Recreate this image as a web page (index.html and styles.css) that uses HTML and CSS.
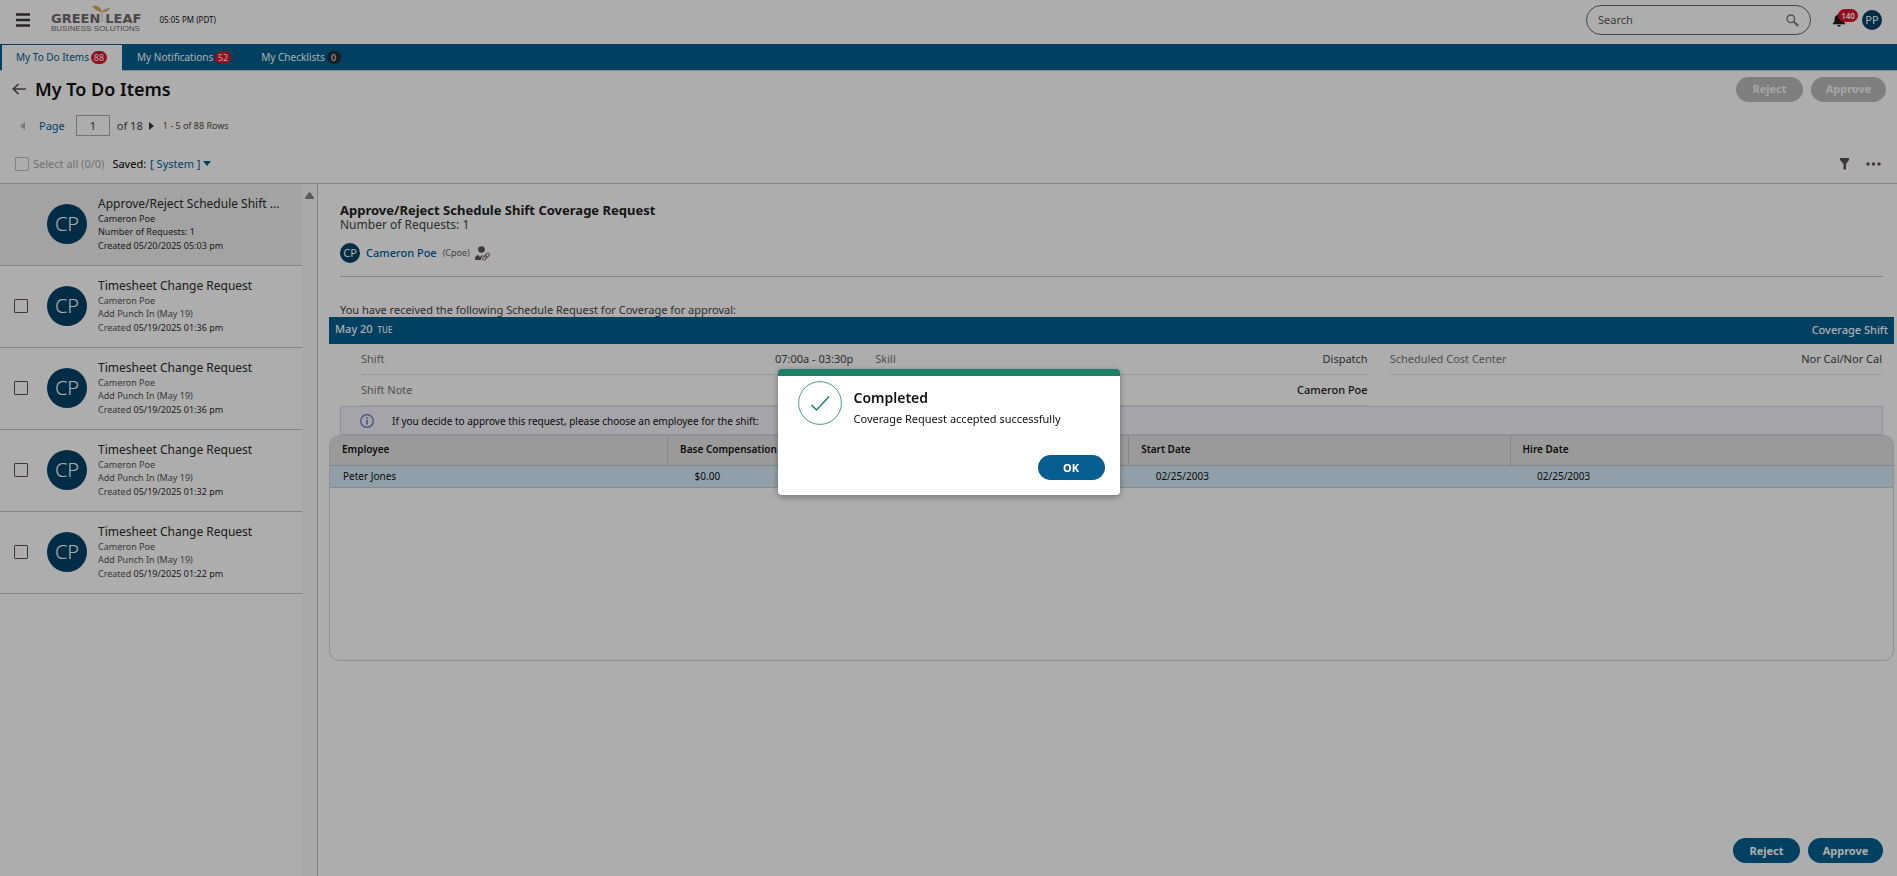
FILE: index.html
```html
<!DOCTYPE html>
<html lang="en">

<head>
    <meta charset="UTF-8">
    <meta name="viewport" content="width=device-width, initial-scale=1.0">
    <title>My To Do Items</title>
    <link rel="stylesheet" href="styles.css">
</head>

<body>
    <!-- Top bar: menu, logo, clock, search, user -->
    <header class="topbar">
        <button class="icon-btn menu-btn" aria-label="Menu">
            <svg width="14" height="14" viewBox="0 0 14 14"><path d="M0 1.5h14M0 7h14M0 12.5h14" stroke="#3c3536" stroke-width="2.4"/></svg>
        </button>
        <a class="logo" href="#" aria-label="Green Leaf Business Solutions">
            <span class="logo-name">GREEN<svg class="logo-leaf" width="22" height="18" viewBox="0 0 22 18"><path d="M12 7C9 7 5 5 2 1c5-1 9 1 10 6z" fill="#d8a95e"/><path d="M12 7c1-3 4-4 8-4-1 3-4 5-8 4z" fill="#e0b878"/><path d="M12 6v11" stroke="#d5c6ac" stroke-width="1"/></svg>LEAF</span>
            <span class="logo-sub">BUSINESS SOLUTIONS</span>
        </a>
        <span class="clock">05:05 PM (PDT)</span>
        <div class="search">
            <input type="search" placeholder="Search" aria-label="Search">
            <svg width="13" height="13" viewBox="0 0 13 13" fill="none" stroke="#7a7a7a"><circle cx="4.8" cy="4.8" r="3.8" stroke-width="1.4"/><path d="M7.800 7.800l4.400 4.200" stroke-width="2"/></svg>
        </div>
        <button class="icon-btn bell" aria-label="Notifications">
            <svg width="14" height="14" viewBox="0 0 14 14" fill="#1c1c1c"><path d="M7 0.5c-.8 0-1.2.5-1.2 1.2C3.600 2.300 2.600 4 2.600 6c0 2.500-.6 3.600-1.900 4.500V11.300h12.600v-.8C12 9.600 11.400 8.500 11.400 6c0-2-1-3.700-3.200-4.300C8.200 1 7.800.5 7 .5zM5.300 12h3.400c0 1-.7 1.700-1.700 1.700S5.300 13 5.300 12z"/></svg>
            <span class="badge bell-count">140</span>
        </button>
        <button class="avatar avatar-sm">PP</button>
    </header>

    <!-- Tabs -->
    <nav class="tabs">
        <a class="tab active" href="#">My To Do Items<span class="badge">88</span></a>
        <a class="tab" href="#">My Notifications<span class="badge">52</span></a>
        <a class="tab" href="#">My Checklists<span class="badge dark">0</span></a>
    </nav>

    <!-- Page title -->
    <div class="title-row">
        <button class="icon-btn" aria-label="Back">
            <svg width="14" height="12" viewBox="0 0 14 12" fill="none" stroke="#5d5053" stroke-width="1.700"><path d="M14 6H1.500M6.500 1L1.300 6l5.200 5"/></svg>
        </button>
        <h1>My To Do Items</h1>
        <div class="actions">
            <button class="btn" disabled>Reject</button>
            <button class="btn btn-approve" disabled>Approve</button>
        </div>
    </div>

    <!-- Paging -->
    <div class="pager">
        <button class="icon-btn" aria-label="Previous page" disabled>
            <svg width="5" height="8" viewBox="0 0 5 8"><path d="M5 0v8L0 4z" fill="#b4b4b4"/></svg>
        </button>
        <label class="page-label" for="page">Page</label>
        <input class="page-input" id="page" type="text" value="1">
        <span>of 18</span>
        <button class="icon-btn page-next" aria-label="Next page">
            <svg width="5" height="8" viewBox="0 0 5 8"><path d="M0 0v8l5-4z" fill="#3c3536"/></svg>
        </button>
        <span class="rows">1 - 5 of 88 Rows</span>
    </div>

    <!-- Select all, saved view and filter -->
    <div class="filter-row">
        <input class="check check-off" id="select-all" type="checkbox" disabled>
        <label class="muted" for="select-all">Select all (0/0)</label>
        <span class="saved">Saved:</span>
        <a class="saved-view" href="#">[ System ]<svg width="8" height="5" viewBox="0 0 8 5"><path d="M0 0h8L4 5z" fill="#00608f"/></svg></a>
        <button class="icon-btn filter" aria-label="Filter">
            <svg width="9" height="12" viewBox="0 0 9 12"><path d="M0 0h9v2L6 6v5.500H3.500V6L0 2z" fill="#5d5053"/></svg>
        </button>
        <button class="icon-btn" aria-label="More">
            <svg width="15" height="4" viewBox="0 0 15 4" fill="#5d5053"><circle cx="2" cy="2" r="1.700"/><circle cx="7.500" cy="2" r="1.700"/><circle cx="13" cy="2" r="1.700"/></svg>
        </button>
    </div>

    <main class="content">
        <!-- List of requests -->
        <aside class="sidebar">
            <ul class="list">
                <li class="item selected">
                    <span class="check-space"></span>
                    <span class="avatar avatar-lg">CP</span>
                    <div class="item-text">
                        <h3>Approve/Reject Schedule Shift ...</h3>
                        <p>Cameron Poe</p>
                        <p>Number of Requests: 1</p>
                        <p class="created">Created <span>05/20/2025 05:03 pm</span></p>
                    </div>
                </li>
                <li class="item">
                    <input class="check" type="checkbox" aria-label="Select request">
                    <span class="avatar avatar-lg">CP</span>
                    <div class="item-text">
                        <h3>Timesheet Change Request</h3>
                        <p>Cameron Poe</p>
                        <p>Add Punch In (May 19)</p>
                        <p class="created">Created <span>05/19/2025 01:36 pm</span></p>
                    </div>
                </li>
                <li class="item">
                    <input class="check" type="checkbox" aria-label="Select request">
                    <span class="avatar avatar-lg">CP</span>
                    <div class="item-text">
                        <h3>Timesheet Change Request</h3>
                        <p>Cameron Poe</p>
                        <p>Add Punch In (May 19)</p>
                        <p class="created">Created <span>05/19/2025 01:36 pm</span></p>
                    </div>
                </li>
                <li class="item">
                    <input class="check" type="checkbox" aria-label="Select request">
                    <span class="avatar avatar-lg">CP</span>
                    <div class="item-text">
                        <h3>Timesheet Change Request</h3>
                        <p>Cameron Poe</p>
                        <p>Add Punch In (May 19)</p>
                        <p class="created">Created <span>05/19/2025 01:32 pm</span></p>
                    </div>
                </li>
                <li class="item">
                    <input class="check" type="checkbox" aria-label="Select request">
                    <span class="avatar avatar-lg">CP</span>
                    <div class="item-text">
                        <h3>Timesheet Change Request</h3>
                        <p>Cameron Poe</p>
                        <p>Add Punch In (May 19)</p>
                        <p class="created">Created <span>05/19/2025 01:22 pm</span></p>
                    </div>
                </li>
            </ul>
            <div class="scrollbar">
                <svg width="9" height="7" viewBox="0 0 9 7"><path d="M3.700.6a1 1 0 0 1 1.600 0L8.800 5.400Q9.300 7 8 7H1Q-.3 7 .2 5.400z" fill="#858585"/></svg>
            </div>
        </aside>

        <!-- Request detail -->
        <section class="detail">
            <div class="detail-head">
                <h2>Approve/Reject Schedule Shift Coverage Request</h2>
                <p class="count">Number of Requests: 1</p>
                <div class="person">
                    <span class="avatar avatar-sm">CP</span>
                    <a class="person-name" href="#">Cameron Poe</a>
                    <span class="person-id">(Cpoe)</span>
                    <svg width="15" height="15" viewBox="0 0 15 15"><circle cx="6.500" cy="3.500" r="3.300" fill="#5d5053"/><path d="M0 14c0-3 1-4.500 3-5l2 2 2-2 .8.4L6 12v2z" fill="#5d5053"/><g fill="none" stroke="#8a8284" stroke-width="1.200"><rect x="7.200" y="10.300" width="5" height="3" rx="1.500" transform="rotate(-45 9.700 11.800)"/><rect x="9.700" y="7.900" width="5" height="3" rx="1.500" transform="rotate(-45 12.200 9.400)"/></g></svg>
                </div>
            </div>
            <p class="intro">You have received the following Schedule Request for Coverage for approval:</p>
            <div class="day-bar">
                <span>May 20 <small>TUE</small></span>
                <span>Coverage Shift</span>
            </div>
            <dl class="fields">
                <div class="field"><dt>Shift</dt><dd>07:00a - 03:30p</dd></div>
                <div class="field"><dt>Skill</dt><dd>Dispatch</dd></div>
                <div class="field"><dt>Scheduled Cost Center</dt><dd>Nor Cal/Nor Cal</dd></div>
                <div class="field wide"><dt>Shift Note</dt><dd class="strong">Cameron Poe</dd></div>
            </dl>
            <div class="info">
                <svg width="14" height="14" viewBox="0 0 14 14" fill="none"><circle cx="7" cy="7" r="6.300" stroke="#5c78c0" stroke-width="1.200"/><path d="M7 6v4.500M7 3.300v1.500" stroke="#7a5fc0" stroke-width="1.500"/></svg>
                If you decide to approve this request, please choose an employee for the shift:
            </div>
            <div class="grid">
                <table>
                    <thead>
                        <tr>
                            <th class="col-employee">Employee</th>
                            <th class="col-base">Base Compensation</th>
                            <th class="col-date">Start Date</th>
                            <th>Hire Date</th>
                        </tr>
                    </thead>
                    <tbody>
                        <tr>
                            <td>Peter Jones</td>
                            <td>$0.00</td>
                            <td>02/25/2003</td>
                            <td>02/25/2003</td>
                        </tr>
                    </tbody>
                </table>
            </div>
            <div class="actions actions-bottom">
                <button class="btn">Reject</button>
                <button class="btn btn-approve">Approve</button>
            </div>
        </section>
    </main>

    <!-- Success message over the page -->
    <div class="overlay">
        <div class="dialog" role="dialog" aria-labelledby="dialog-title">
            <svg class="dialog-icon" width="44" height="44" viewBox="0 0 44 44" fill="none" stroke="#1c8069"><circle cx="22" cy="22" r="21.400" stroke="#4f9a93"/><path d="M13.500 24l5 5L31 15.500" stroke-width="1.500"/></svg>
            <div class="dialog-text">
                <h2 id="dialog-title">Completed</h2>
                <p>Coverage Request accepted successfully</p>
            </div>
            <button class="btn dialog-ok">OK</button>
        </div>
    </div>
</body>

</html>
```
FILE: styles.css
```css
* {
    box-sizing: border-box;
}

body {
    margin: 0;
    min-height: 100vh;
    display: flex;
    flex-direction: column;
    font-family: "Noto Sans", sans-serif;
    font-size: 11px;
    line-height: 16px;
    color: #444;
    background-color: #fff;
}

h1, h2, h3, p, ul, dl, dd {
    margin: 0;
    padding: 0;
}

a {
    color: #00609b;
    text-decoration: none;
}

button, input {
    font: inherit;
    color: inherit;
}

svg {
    display: block;
    flex: none;
}

.icon-btn {
    display: flex;
    padding: 0;
    border: none;
    background: none;
    cursor: pointer;
}

/* Buttons */
.btn {
    height: 25px;
    min-width: 67px;
    padding: 0 13px;
    border: none;
    border-radius: 13px;
    background-color: #00608f;
    color: #fff;
    font-weight: 700;
    cursor: pointer;
}

.btn:disabled {
    background-color: #bcbcbc;
    color: #f4f4f4;
}

.btn-approve {
    min-width: 75px;
}

.actions {
    display: flex;
    gap: 8px;
    margin-left: auto;
}

/* Round initials */
.avatar {
    display: flex;
    flex: none;
    align-items: center;
    justify-content: center;
    padding: 0;
    border: none;
    border-radius: 50%;
    background-color: #004268;
    color: #fff;
}

.avatar-sm {
    width: 20px;
    height: 20px;
    font-size: 11px;
}

.avatar-lg {
    width: 40px;
    height: 40px;
    font-size: 20px;
    font-weight: 300;
}

.badge {
    padding: 0 2px;
    min-width: 16px;
    border-radius: 7px;
    background-color: #e0122e;
    color: #fff;
    font-size: 9px;
    line-height: 13px;
    text-align: center;
}

.badge.dark {
    min-width: 14px;
    background-color: #262c36;
}

/* Top bar */
.topbar {
    display: flex;
    align-items: center;
    height: 44px;
    padding: 0 15px 4px 16px;
}

.logo {
    display: flex;
    flex-direction: column;
    margin: 6px 18px 0 21px;
    color: #6f6a6c;
}

.logo-name {
    display: flex;
    font-family: "DejaVu Sans", sans-serif;
    font-size: 13px;
    font-weight: 700;
    line-height: 11px;
}

.logo-leaf {
    margin: -8px -7px 0 -10px;
}

.logo-sub {
    font-family: "Liberation Sans", sans-serif;
    font-size: 8px;
    line-height: 10px;
}

.clock {
    font-size: 8px;
    color: #111;
}

.search {
    display: flex;
    align-items: center;
    width: 225px;
    height: 30px;
    margin-left: auto;
    margin-right: 21px;
    padding: 0 11px;
    border: 1px solid #6a6a6a;
    border-radius: 15px;
}

.search input {
    flex: 1;
    min-width: 0;
    padding: 0;
    border: none;
    outline: none;
    background: none;
}

.search input::placeholder {
    color: #5a5a5a;
}

.bell {
    position: relative;
    margin-right: 16px;
}

.bell-count {
    position: absolute;
    left: 6px;
    top: -4px;
    min-width: 20px;
    font-size: 8px;
    font-weight: 600;
}

/* Tabs */
.tabs {
    display: flex;
    height: 27px;
    padding-left: 2px;
    background-color: #00608f;
    border-bottom: 1px solid #c4c4c4;
}

.tab {
    display: flex;
    align-items: center;
    gap: 2px;
    padding: 0 15px;
    color: #fff;
    font-size: 10px;
}

.tab.active {
    height: 26px;
    margin-top: 1px;
    padding: 0 15px 2px 14px;
    background-color: #fff;
    color: #00608f;
}

/* Title */
.title-row {
    display: flex;
    align-items: center;
    gap: 9px;
    height: 36px;
    padding: 0 11px 0 12px;
}

h1 {
    font-size: 18px;
    font-weight: 600;
    line-height: 24px;
    color: #111;
}

/* Paging */
.pager {
    display: flex;
    align-items: center;
    height: 37px;
    padding-left: 20px;
}

.page-label {
    margin: 0 11px 0 14px;
    color: #00609b;
}

.page-input {
    width: 34px;
    height: 21px;
    margin-right: 7px;
    padding: 0;
    border: 1px solid #aaa;
    background: none;
    text-align: center;
}

.page-next {
    margin: 0 9px 0 6px;
}

.rows {
    font-size: 9px;
    color: #575140;
}

/* Filter row */
.filter-row {
    display: flex;
    align-items: center;
    height: 40px;
    padding: 0 16px 0 15px;
    border-bottom: 1px solid #c4c4c4;
}

.check {
    appearance: none;
    flex: none;
    width: 14px;
    height: 14px;
    margin: 0;
    border: 1px solid #5d5053;
    border-radius: 1px;
}

.check-off {
    border-color: #c0c0c0;
}

.muted {
    margin: 0 8px 0 4px;
    color: #aaa;
}

.saved {
    margin-right: 4px;
    color: #000;
}

.saved-view {
    display: flex;
    align-items: center;
    gap: 3px;
}

.filter {
    margin: 0 17px 0 auto;
}

/* Content */
.content {
    display: flex;
    flex: 1;
}

.sidebar {
    display: flex;
    width: 318px;
    border-right: 1px solid #c4c4c4;
}

.list {
    flex: 1;
    min-width: 0;
    list-style: none;
}

.item {
    display: flex;
    align-items: center;
    height: 82px;
    padding: 0 16px 1px 14px;
    border-bottom: 1px solid #c4c4c4;
}

.item.selected {
    background-color: #f0f0f0;
}

.check-space {
    flex: none;
    width: 14px;
}

.item .avatar {
    margin: 0 11px 0 19px;
}

.item-text {
    min-width: 0;
    font-size: 9px;
    line-height: 13px;
}

.item-text h3 {
    font-size: 12px;
    font-weight: 400;
    line-height: 16px;
    color: #2b2b2b;
}

.item-text p {
    color: #555;
}

.item-text .created {
    margin-top: 1px;
}

.item-text .created span,
.selected .item-text p {
    color: #2b2b2b;
}

.scrollbar {
    display: flex;
    justify-content: center;
    width: 15px;
    padding-top: 8px;
    background-color: #fafafa;
}

/* Detail */
.detail {
    display: flex;
    flex: 1;
    flex-direction: column;
    min-width: 0;
    padding: 17px 3px 13px 11px;
}

.detail-head {
    margin: 0 11px;
    padding-bottom: 13px;
    border-bottom: 1px solid #c4c4c4;
}

.detail-head h2 {
    font-size: 13px;
    font-weight: 700;
    line-height: 18px;
    color: #222;
}

.count {
    font-size: 12px;
    line-height: 12px;
}

.person {
    display: flex;
    align-items: center;
    margin-top: 12px;
}

.person-name {
    margin: 0 6px 0 6px;
    font-weight: 500;
}

.person-id {
    margin-right: 5px;
    font-size: 9px;
    color: #666;
}

.intro {
    margin: 26px 11px 0;
    line-height: 14px;
}

.day-bar {
    display: flex;
    align-items: center;
    justify-content: space-between;
    height: 27px;
    padding: 0 6px 2px;
    background-color: #00608f;
    color: #fff;
    font-weight: 500;
}

.day-bar small {
    margin-left: 2px;
    font-size: 8px;
}

.fields {
    display: grid;
    grid-template-columns: repeat(3, 1fr);
    column-gap: 22px;
    margin: 0 12px 0 32px;
}

.field {
    display: flex;
    align-items: center;
    justify-content: space-between;
    height: 31px;
    border-bottom: 1px solid #e4e4e4;
}

.field.wide {
    grid-column: span 2;
}

.field dt {
    color: #777;
}

.field .strong {
    font-weight: 500;
    color: #222;
}

.info {
    display: flex;
    align-items: center;
    gap: 18px;
    height: 29px;
    margin: 0 11px;
    padding-left: 19px;
    border: 1px solid #d8d8ee;
    background-color: #f3f3fa;
    font-size: 10px;
    color: #111;
}

/* Employee table */
.grid {
    height: 226px;
    overflow: hidden;
    border: 1px solid #d6d6d6;
    border-radius: 10px;
}

table {
    width: 100%;
    table-layout: fixed;
    border-collapse: collapse;
    font-size: 10px;
    color: #111;
}

th {
    height: 29px;
    padding: 0 12px 2px;
    background-color: #e4e4e4;
    border-bottom: 1px solid #c4c4c4;
    font-weight: 600;
    text-align: left;
}

th + th {
    border-left: 1px solid #c4c4c4;
}

td {
    height: 22px;
    padding: 0 27px 1px;
    background-color: #d8ebf8;
    border-bottom: 1px solid #c0cdd6;
}

td:first-child {
    padding-left: 13px;
}

.col-employee {
    width: 21.6%;
}

.col-base {
    width: 29.5%;
}

.col-date {
    width: 24.4%;
}

.actions-bottom {
    margin-top: auto;
    margin-right: 11px;
}

/* Dialog */
.overlay {
    position: fixed;
    inset: 0;
    display: flex;
    align-items: center;
    justify-content: center;
    padding-bottom: 12px;
    background-color: rgba(0, 0, 0, 0.32);
}

.dialog {
    display: grid;
    grid-template-columns: auto 1fr;
    column-gap: 12px;
    row-gap: 28px;
    width: 342px;
    padding: 5px 15px 15px 20px;
    border-top: 7px solid #1c8069;
    border-radius: 4px;
    background-color: #fff;
    box-shadow: 0 2px 6px rgba(0, 0, 0, 0.35);
    color: #111;
}

.dialog-text {
    padding-top: 8px;
}

.dialog h2 {
    font-size: 14px;
    font-weight: 600;
    line-height: 18px;
}

.dialog p {
    margin-top: 4px;
}

.dialog-ok {
    grid-column: 2;
    justify-self: end;
    background-color: #055d90;
}
```
